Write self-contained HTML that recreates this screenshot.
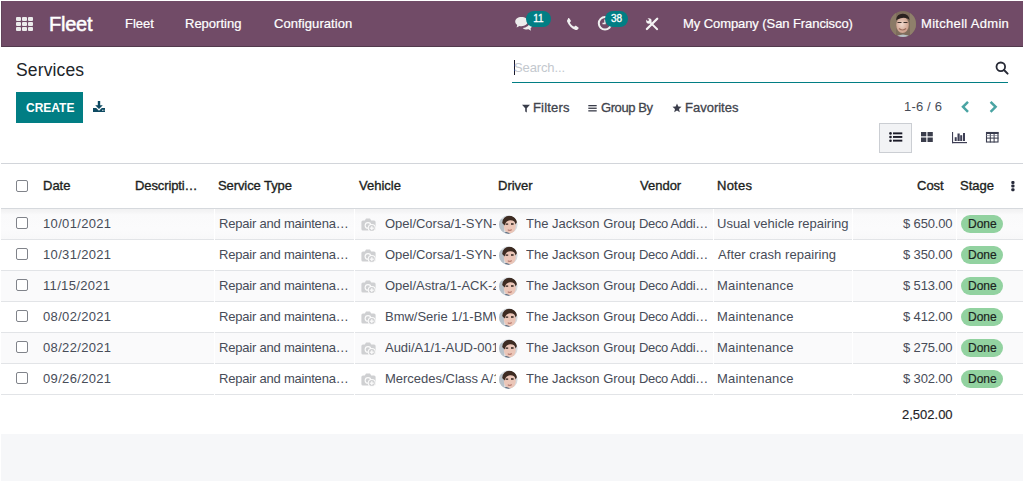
<!DOCTYPE html>
<html><head><meta charset="utf-8">
<title>Services - Fleet</title>
<style>
*{box-sizing:border-box;margin:0;padding:0}
html,body{width:1024px;height:482px;overflow:hidden;background:#fff;font-family:"Liberation Sans",sans-serif;position:relative}
.a{position:absolute;white-space:nowrap;line-height:1}
.b{position:absolute}
.sq{position:absolute;width:5px;height:4px;background:#ebebeb;border-radius:1px}
.badge{position:absolute;height:16px;border-radius:8px;background:#017E84;color:#fff;font-size:10px;-webkit-text-stroke:0.3px #fff;text-align:center;line-height:15.5px;letter-spacing:0px}
.hl{position:absolute;left:1px;width:1022px;height:1px;background:#dee2e6}
.cb{position:absolute;left:16px;width:12px;height:12px;border:1.2px solid #80838a;border-radius:2px;background:#fff}
.done{position:absolute;left:961px;width:42px;height:18px;border-radius:9px;background:#92d2a0}
.stripe{position:absolute;left:1px;width:1022px;height:30px;background:#fafafb}
svg{position:absolute;overflow:visible}
</style></head><body>
<!-- navbar -->
<div class="b" style="left:1px;top:1px;width:1022px;height:46px;background:#714B67;border-bottom:1px solid #523a4d;border-left:1px solid #62445b"></div>
<div class="sq" style="left:16px;top:17px"></div><div class="sq" style="left:22px;top:17px"></div><div class="sq" style="left:28px;top:17px"></div>
<div class="sq" style="left:16px;top:22px"></div><div class="sq" style="left:22px;top:22px"></div><div class="sq" style="left:28px;top:22px"></div>
<div class="sq" style="left:16px;top:27px"></div><div class="sq" style="left:22px;top:27px"></div><div class="sq" style="left:28px;top:27px"></div>

<!-- chat icon -->
<svg style="left:514px;top:16px" width="20" height="16" viewBox="0 0 20 16">
 <path d="M7.5 1C3.9 1 1.2 3 1.2 5.6c0 1.4 .8 2.6 2 3.4L2.6 11.6 5.5 10c.6.1 1.3.2 2 .2 3.6 0 6.3-2 6.3-4.6S11.1 1 7.5 1z" fill="#ececec"/>
 <path d="M15.5 6.5c0 2.9-3 5.2-6.8 5.4 1 1 2.6 1.6 4.3 1.6.5 0 1-.05 1.5-.15l2.5 1.35-.5-2.3c1-.7 1.6-1.7 1.6-2.8 0-1-.6-2-1.6-2.7z" fill="#ececec"/>
</svg>
<div class="badge" style="left:526px;top:11px;width:25px">11</div>
<!-- phone -->
<svg style="left:566px;top:17px" width="14" height="14" viewBox="0 0 14 14">
 <path d="M3.2 1.2 L4.8 3.6 C5 4 4.9 4.4 4.6 4.7 L3.8 5.4 C4.6 7.3 6.2 8.9 8.2 9.8 L8.9 9 C9.2 8.7 9.6 8.6 10 8.8 L12.4 10.4 C12.8 10.7 12.8 11.2 12.5 11.6 L11.4 12.7 C10.9 13.1 10.2 13.2 9.6 13 C5.8 11.6 2.6 8.4 1.1 4.5 C.9 3.9 1 3.2 1.5 2.7 L2.3 1.1 C2.6 .8 3 .8 3.2 1.2z" fill="#f0f0f0"/>
</svg>
<!-- clock -->
<svg style="left:597px;top:15px" width="16" height="16" viewBox="0 0 16 16">
 <circle cx="8" cy="8.3" r="6.2" fill="none" stroke="#f0f0f0" stroke-width="2"/>
 <path d="M8 4.5V8.5H5.5" fill="none" stroke="#f0f0f0" stroke-width="1.4"/>
</svg>
<div class="badge" style="left:605px;top:11px;width:23px">38</div>
<!-- tools -->
<svg style="left:646px;top:18px" width="12" height="12" viewBox="0 0 12 12">
 <path d="M.9 11 L11.2 .7" stroke="#f4f4f4" stroke-width="2.3" stroke-linecap="round"/>
 <path d="M4.2 4.4 L11.2 11.2" stroke="#f4f4f4" stroke-width="1.9" stroke-linecap="round"/>
 <circle cx="2.9" cy="3" r="2.7" fill="#f4f4f4"/>
 <path d="M2.6 2.7 L0 0.1" stroke="#714B67" stroke-width="1.9"/>
</svg>
<!-- user avatar -->
<svg style="left:890px;top:11px" width="26" height="26" viewBox="0 0 26 26">
 <defs><clipPath id="ua"><circle cx="13" cy="13" r="13"/></clipPath>
 <radialGradient id="fg" cx="0.45" cy="0.45" r="0.6"><stop offset="0" stop-color="#f0d8cc"/><stop offset="1" stop-color="#c99a85"/></radialGradient></defs>
 <g clip-path="url(#ua)">
  <rect width="26" height="26" fill="#7e6d5c"/>
  <rect x="0" y="0" width="6" height="26" fill="#8a7a66"/>
  <rect x="20" y="0" width="6" height="26" fill="#8f806b"/>
  <ellipse cx="12.5" cy="14" rx="6.3" ry="8" fill="url(#fg)"/>
  <path d="M6 9 Q7 2.5 13 2.8 Q19 3 19.5 9 L18 7.8 Q13 5.5 7.5 8.5z" fill="#2a2220"/>
  <path d="M7.5 11.5 H11.5 M13.5 11.5 H17.5" stroke="#3a2f2a" stroke-width="1"/>
  <path d="M9 17.5 Q12.5 20.5 16 17.5" stroke="#9c6d5c" stroke-width="1.2" fill="none"/>
  <path d="M3 27 Q13 20 23 27z" fill="#b9c2c8"/>
 </g>
</svg>

<!-- control panel -->
<div class="b" style="left:16px;top:92px;width:67px;height:31px;background:#017E84"></div>
<svg style="left:92px;top:100px" width="14" height="13" viewBox="0 0 14 13">
 <path d="M5.8 1 H8.2 V5.2 H10.8 L7 9 L3.2 5.2 H5.8z" fill="#0e4a62"/>
 <path d="M1 8 H4.2 L7 10.8 L9.8 8 H13 V12 H1z" fill="#0e4a62"/>
 <rect x="10" y="9.8" width=".9" height=".9" fill="#fff"/><rect x="11.5" y="9.8" width=".9" height=".9" fill="#fff"/>
</svg>
<div class="b" style="left:514px;top:60px;width:1px;height:15px;background:#1b1b2a"></div>
<div class="b" style="left:512px;top:82px;width:496px;height:1px;background:#017E84"></div>
<svg style="left:995px;top:61px" width="14" height="14" viewBox="0 0 14 14">
 <circle cx="5.8" cy="5.8" r="4.3" fill="none" stroke="#272a36" stroke-width="1.8"/>
 <path d="M9 9 L12.6 12.6" stroke="#272a36" stroke-width="2" stroke-linecap="round"/>
</svg>
<!-- filter funnel -->
<svg style="left:521px;top:104px" width="10" height="9" viewBox="0 0 10 9">
 <path d="M1 .8 H9 L5.8 4.3 V8.6 L4.2 7.4 V4.3z" fill="#3a3d4a"/>
</svg>
<!-- group by bars -->
<svg style="left:588px;top:104px" width="10" height="9" viewBox="0 0 10 9">
 <rect x=".3" y="1" width="8.4" height="1.3" fill="#3a3d4a"/>
 <rect x=".3" y="3.6" width="8.4" height="1.3" fill="#3a3d4a"/>
 <rect x=".3" y="6.2" width="8.4" height="1.3" fill="#3a3d4a"/>
</svg>
<!-- star -->
<svg style="left:672px;top:103px" width="10" height="10" viewBox="0 0 10 10">
 <path d="M5 .6 L6.3 3.6 L9.5 3.8 L7 5.9 L7.8 9.2 L5 7.4 L2.2 9.2 L3 5.9 L.5 3.8 L3.7 3.6z" fill="#3a3d4a"/>
</svg>
<!-- chevrons -->
<svg style="left:960px;top:100px" width="12" height="14" viewBox="0 0 12 14">
 <path d="M8 1.8 L3 6.8 L8 11.8" fill="none" stroke="#4aa4a3" stroke-width="2.5"/>
</svg>
<svg style="left:988px;top:100px" width="12" height="14" viewBox="0 0 12 14">
 <path d="M2.6 1.8 L7.6 6.8 L2.6 11.8" fill="none" stroke="#4aa4a3" stroke-width="2.5"/>
</svg>
<!-- view switcher -->
<div class="b" style="left:879px;top:123px;width:33px;height:30px;border:1px solid #cbced3;background:#f2f3f5"></div>
<svg style="left:888px;top:131px" width="16" height="12" viewBox="0 0 16 12">
 <circle cx="2.5" cy="2.4" r="1.3" fill="#1b1b28"/><circle cx="2.5" cy="6" r="1.3" fill="#1b1b28"/><circle cx="2.5" cy="9.7" r="1.3" fill="#1b1b28"/>
 <rect x="5" y="1.4" width="9.3" height="1.9" fill="#1b1b28"/><rect x="5" y="5" width="9.3" height="1.9" fill="#1b1b28"/><rect x="5" y="8.7" width="9.3" height="1.9" fill="#1b1b28"/>
</svg>
<svg style="left:920px;top:131px" width="14" height="12" viewBox="0 0 14 12">
 <rect x="1" y="1" width="5.3" height="4.3" fill="#3b3e4c"/><rect x="7.5" y="1" width="5.3" height="4.3" fill="#3b3e4c"/>
 <rect x="1" y="6.5" width="5.3" height="4.5" fill="#3b3e4c"/><rect x="7.5" y="6.5" width="5.3" height="4.5" fill="#3b3e4c"/>
</svg>
<svg style="left:951px;top:131px" width="18" height="13" viewBox="0 0 18 13">
 <rect x="1" y="1" width="1.1" height="11.2" fill="#3e3f55"/><rect x="1" y="11" width="15" height="1.2" fill="#3e3f55"/>
 <rect x="3.7" y="6.2" width="2" height="3.8" fill="#3e3f55"/><rect x="6.5" y="2.5" width="2.2" height="7.5" fill="#3e3f55"/>
 <rect x="9.2" y="4.2" width="2" height="5.8" fill="#3e3f55"/><rect x="12" y="2" width="2" height="8" fill="#3e3f55"/>
</svg>
<svg style="left:985px;top:131px" width="15" height="13" viewBox="0 0 15 13">
 <rect x="1.5" y="1.5" width="11.5" height="9.5" fill="none" stroke="#3a3d4f" stroke-width="1.1"/>
 <rect x="1" y="1" width="12.5" height="2" fill="#3a3d4f"/>
 <rect x="1" y="6.6" width="12.5" height="1" fill="#3a3d4f"/>
 <rect x="4.8" y="1" width="1" height="10.5" fill="#3a3d4f"/><rect x="8.6" y="1" width="1" height="10.5" fill="#3a3d4f"/>
 <rect x="1" y="4.3" width="12.5" height=".6" fill="#6d7080"/>
</svg>

<!-- table -->
<div class="hl" style="top:163px;background:#d2d5da"></div>
<div class="cb" style="top:180px"></div>

<div class="hl" style="top:208px;background:#d6d9dd"></div>
<div class="stripe" style="top:209px;background:linear-gradient(#f1f1f2 0px,#f5f5f6 3px,#fafafb 6px,#fbfbfc 20px,#f8f8f9 30px)"></div>
<div class="cb" style="top:217px"></div>
<svg style="left:360px;top:218px" width="17" height="14" viewBox="0 0 17 14"><path d="M6 .6 H10 L11.2 2.4 H14 Q15.6 2.4 15.6 4 V11 Q15.6 12.6 14 12.6 H3 Q1.4 12.6 1.4 11 V4 Q1.4 2.4 3 2.4 H4.8z" fill="#cfd0d2"/><circle cx="8" cy="7.4" r="3.4" fill="#fbfbfb"/><circle cx="8" cy="7.4" r="2.2" fill="#cfd0d2"/><circle cx="11.8" cy="10" r="4" fill="#fbfbfb"/><circle cx="11.8" cy="10" r="3" fill="#cfd0d2"/><rect x="11.15" y="8.2" width="1.3" height="4" fill="#fbfbfb"/><rect x="9.8" y="9.55" width="4" height="1.3" fill="#fbfbfb"/></svg>
<svg style="left:499px;top:215px" width="19" height="19" viewBox="0 0 19 19"><defs><clipPath id="av0"><circle cx="9.3" cy="9.5" r="9.3"/></clipPath></defs><g clip-path="url(#av0)"><rect width="19" height="19" fill="#d5dbe0"/><rect x="0" y="4" width="5" height="15" fill="#b7c1c9"/><ellipse cx="10.8" cy="11.3" rx="5.9" ry="7.2" fill="#ebc6b8"/><path d="M3.2 8 Q3.8 1 10.5 .8 Q17.5 .8 17.8 7.5 L16.6 9.5 Q16 5 11 5.2 Q6.8 5.4 5.6 10.5z" fill="#3d2b22"/><path d="M6.6 9.2 H9.2 M12 9 H14.6" stroke="#2e221c" stroke-width="1.3"/><path d="M8.8 15 Q10.8 15.8 12.8 14.8" stroke="#a8645a" stroke-width="1" fill="none"/><path d="M4 19.5 Q6 16 9 17.5 Q12 19 14 19.5z" fill="#5a6d80"/></g></svg>
<div class="done" style="top:215px"></div>
<div class="a" style="left:968px;top:218px;font-size:12px;letter-spacing:0.000px;color:#1b2420;-webkit-text-stroke:0.2px #1b2420">Done</div>
<div class="hl" style="top:239px;background:#e2e4e7"></div>
<div class="cb" style="top:248px"></div>
<svg style="left:360px;top:249px" width="17" height="14" viewBox="0 0 17 14"><path d="M6 .6 H10 L11.2 2.4 H14 Q15.6 2.4 15.6 4 V11 Q15.6 12.6 14 12.6 H3 Q1.4 12.6 1.4 11 V4 Q1.4 2.4 3 2.4 H4.8z" fill="#cfd0d2"/><circle cx="8" cy="7.4" r="3.4" fill="#fbfbfb"/><circle cx="8" cy="7.4" r="2.2" fill="#cfd0d2"/><circle cx="11.8" cy="10" r="4" fill="#fbfbfb"/><circle cx="11.8" cy="10" r="3" fill="#cfd0d2"/><rect x="11.15" y="8.2" width="1.3" height="4" fill="#fbfbfb"/><rect x="9.8" y="9.55" width="4" height="1.3" fill="#fbfbfb"/></svg>
<svg style="left:499px;top:246px" width="19" height="19" viewBox="0 0 19 19"><defs><clipPath id="av1"><circle cx="9.3" cy="9.5" r="9.3"/></clipPath></defs><g clip-path="url(#av1)"><rect width="19" height="19" fill="#d5dbe0"/><rect x="0" y="4" width="5" height="15" fill="#b7c1c9"/><ellipse cx="10.8" cy="11.3" rx="5.9" ry="7.2" fill="#ebc6b8"/><path d="M3.2 8 Q3.8 1 10.5 .8 Q17.5 .8 17.8 7.5 L16.6 9.5 Q16 5 11 5.2 Q6.8 5.4 5.6 10.5z" fill="#3d2b22"/><path d="M6.6 9.2 H9.2 M12 9 H14.6" stroke="#2e221c" stroke-width="1.3"/><path d="M8.8 15 Q10.8 15.8 12.8 14.8" stroke="#a8645a" stroke-width="1" fill="none"/><path d="M4 19.5 Q6 16 9 17.5 Q12 19 14 19.5z" fill="#5a6d80"/></g></svg>
<div class="done" style="top:246px"></div>
<div class="a" style="left:968px;top:249px;font-size:12px;letter-spacing:0.000px;color:#1b2420;-webkit-text-stroke:0.2px #1b2420">Done</div>
<div class="hl" style="top:270px;background:#e2e4e7"></div>
<div class="stripe" style="top:271px"></div>
<div class="cb" style="top:279px"></div>
<svg style="left:360px;top:280px" width="17" height="14" viewBox="0 0 17 14"><path d="M6 .6 H10 L11.2 2.4 H14 Q15.6 2.4 15.6 4 V11 Q15.6 12.6 14 12.6 H3 Q1.4 12.6 1.4 11 V4 Q1.4 2.4 3 2.4 H4.8z" fill="#cfd0d2"/><circle cx="8" cy="7.4" r="3.4" fill="#fbfbfb"/><circle cx="8" cy="7.4" r="2.2" fill="#cfd0d2"/><circle cx="11.8" cy="10" r="4" fill="#fbfbfb"/><circle cx="11.8" cy="10" r="3" fill="#cfd0d2"/><rect x="11.15" y="8.2" width="1.3" height="4" fill="#fbfbfb"/><rect x="9.8" y="9.55" width="4" height="1.3" fill="#fbfbfb"/></svg>
<svg style="left:499px;top:277px" width="19" height="19" viewBox="0 0 19 19"><defs><clipPath id="av2"><circle cx="9.3" cy="9.5" r="9.3"/></clipPath></defs><g clip-path="url(#av2)"><rect width="19" height="19" fill="#d5dbe0"/><rect x="0" y="4" width="5" height="15" fill="#b7c1c9"/><ellipse cx="10.8" cy="11.3" rx="5.9" ry="7.2" fill="#ebc6b8"/><path d="M3.2 8 Q3.8 1 10.5 .8 Q17.5 .8 17.8 7.5 L16.6 9.5 Q16 5 11 5.2 Q6.8 5.4 5.6 10.5z" fill="#3d2b22"/><path d="M6.6 9.2 H9.2 M12 9 H14.6" stroke="#2e221c" stroke-width="1.3"/><path d="M8.8 15 Q10.8 15.8 12.8 14.8" stroke="#a8645a" stroke-width="1" fill="none"/><path d="M4 19.5 Q6 16 9 17.5 Q12 19 14 19.5z" fill="#5a6d80"/></g></svg>
<div class="done" style="top:277px"></div>
<div class="a" style="left:968px;top:280px;font-size:12px;letter-spacing:0.000px;color:#1b2420;-webkit-text-stroke:0.2px #1b2420">Done</div>
<div class="hl" style="top:301px;background:#e2e4e7"></div>
<div class="cb" style="top:310px"></div>
<svg style="left:360px;top:311px" width="17" height="14" viewBox="0 0 17 14"><path d="M6 .6 H10 L11.2 2.4 H14 Q15.6 2.4 15.6 4 V11 Q15.6 12.6 14 12.6 H3 Q1.4 12.6 1.4 11 V4 Q1.4 2.4 3 2.4 H4.8z" fill="#cfd0d2"/><circle cx="8" cy="7.4" r="3.4" fill="#fbfbfb"/><circle cx="8" cy="7.4" r="2.2" fill="#cfd0d2"/><circle cx="11.8" cy="10" r="4" fill="#fbfbfb"/><circle cx="11.8" cy="10" r="3" fill="#cfd0d2"/><rect x="11.15" y="8.2" width="1.3" height="4" fill="#fbfbfb"/><rect x="9.8" y="9.55" width="4" height="1.3" fill="#fbfbfb"/></svg>
<svg style="left:499px;top:308px" width="19" height="19" viewBox="0 0 19 19"><defs><clipPath id="av3"><circle cx="9.3" cy="9.5" r="9.3"/></clipPath></defs><g clip-path="url(#av3)"><rect width="19" height="19" fill="#d5dbe0"/><rect x="0" y="4" width="5" height="15" fill="#b7c1c9"/><ellipse cx="10.8" cy="11.3" rx="5.9" ry="7.2" fill="#ebc6b8"/><path d="M3.2 8 Q3.8 1 10.5 .8 Q17.5 .8 17.8 7.5 L16.6 9.5 Q16 5 11 5.2 Q6.8 5.4 5.6 10.5z" fill="#3d2b22"/><path d="M6.6 9.2 H9.2 M12 9 H14.6" stroke="#2e221c" stroke-width="1.3"/><path d="M8.8 15 Q10.8 15.8 12.8 14.8" stroke="#a8645a" stroke-width="1" fill="none"/><path d="M4 19.5 Q6 16 9 17.5 Q12 19 14 19.5z" fill="#5a6d80"/></g></svg>
<div class="done" style="top:308px"></div>
<div class="a" style="left:968px;top:311px;font-size:12px;letter-spacing:0.000px;color:#1b2420;-webkit-text-stroke:0.2px #1b2420">Done</div>
<div class="hl" style="top:332px;background:#e2e4e7"></div>
<div class="stripe" style="top:333px"></div>
<div class="cb" style="top:341px"></div>
<svg style="left:360px;top:342px" width="17" height="14" viewBox="0 0 17 14"><path d="M6 .6 H10 L11.2 2.4 H14 Q15.6 2.4 15.6 4 V11 Q15.6 12.6 14 12.6 H3 Q1.4 12.6 1.4 11 V4 Q1.4 2.4 3 2.4 H4.8z" fill="#cfd0d2"/><circle cx="8" cy="7.4" r="3.4" fill="#fbfbfb"/><circle cx="8" cy="7.4" r="2.2" fill="#cfd0d2"/><circle cx="11.8" cy="10" r="4" fill="#fbfbfb"/><circle cx="11.8" cy="10" r="3" fill="#cfd0d2"/><rect x="11.15" y="8.2" width="1.3" height="4" fill="#fbfbfb"/><rect x="9.8" y="9.55" width="4" height="1.3" fill="#fbfbfb"/></svg>
<svg style="left:499px;top:339px" width="19" height="19" viewBox="0 0 19 19"><defs><clipPath id="av4"><circle cx="9.3" cy="9.5" r="9.3"/></clipPath></defs><g clip-path="url(#av4)"><rect width="19" height="19" fill="#d5dbe0"/><rect x="0" y="4" width="5" height="15" fill="#b7c1c9"/><ellipse cx="10.8" cy="11.3" rx="5.9" ry="7.2" fill="#ebc6b8"/><path d="M3.2 8 Q3.8 1 10.5 .8 Q17.5 .8 17.8 7.5 L16.6 9.5 Q16 5 11 5.2 Q6.8 5.4 5.6 10.5z" fill="#3d2b22"/><path d="M6.6 9.2 H9.2 M12 9 H14.6" stroke="#2e221c" stroke-width="1.3"/><path d="M8.8 15 Q10.8 15.8 12.8 14.8" stroke="#a8645a" stroke-width="1" fill="none"/><path d="M4 19.5 Q6 16 9 17.5 Q12 19 14 19.5z" fill="#5a6d80"/></g></svg>
<div class="done" style="top:339px"></div>
<div class="a" style="left:968px;top:342px;font-size:12px;letter-spacing:0.000px;color:#1b2420;-webkit-text-stroke:0.2px #1b2420">Done</div>
<div class="hl" style="top:363px;background:#e2e4e7"></div>
<div class="cb" style="top:372px"></div>
<svg style="left:360px;top:373px" width="17" height="14" viewBox="0 0 17 14"><path d="M6 .6 H10 L11.2 2.4 H14 Q15.6 2.4 15.6 4 V11 Q15.6 12.6 14 12.6 H3 Q1.4 12.6 1.4 11 V4 Q1.4 2.4 3 2.4 H4.8z" fill="#cfd0d2"/><circle cx="8" cy="7.4" r="3.4" fill="#fbfbfb"/><circle cx="8" cy="7.4" r="2.2" fill="#cfd0d2"/><circle cx="11.8" cy="10" r="4" fill="#fbfbfb"/><circle cx="11.8" cy="10" r="3" fill="#cfd0d2"/><rect x="11.15" y="8.2" width="1.3" height="4" fill="#fbfbfb"/><rect x="9.8" y="9.55" width="4" height="1.3" fill="#fbfbfb"/></svg>
<svg style="left:499px;top:370px" width="19" height="19" viewBox="0 0 19 19"><defs><clipPath id="av5"><circle cx="9.3" cy="9.5" r="9.3"/></clipPath></defs><g clip-path="url(#av5)"><rect width="19" height="19" fill="#d5dbe0"/><rect x="0" y="4" width="5" height="15" fill="#b7c1c9"/><ellipse cx="10.8" cy="11.3" rx="5.9" ry="7.2" fill="#ebc6b8"/><path d="M3.2 8 Q3.8 1 10.5 .8 Q17.5 .8 17.8 7.5 L16.6 9.5 Q16 5 11 5.2 Q6.8 5.4 5.6 10.5z" fill="#3d2b22"/><path d="M6.6 9.2 H9.2 M12 9 H14.6" stroke="#2e221c" stroke-width="1.3"/><path d="M8.8 15 Q10.8 15.8 12.8 14.8" stroke="#a8645a" stroke-width="1" fill="none"/><path d="M4 19.5 Q6 16 9 17.5 Q12 19 14 19.5z" fill="#5a6d80"/></g></svg>
<div class="done" style="top:370px"></div>
<div class="a" style="left:968px;top:373px;font-size:12px;letter-spacing:0.000px;color:#1b2420;-webkit-text-stroke:0.2px #1b2420">Done</div>
<div class="hl" style="top:394px;background:#e2e4e7"></div>
<div class="a" style="left:49px;top:14px;font-size:20px;letter-spacing:-0.250px;color:#fff;-webkit-text-stroke:0.5px #fff;">Fleet</div>
<div class="a" style="left:125px;top:17px;font-size:13px;letter-spacing:0.000px;color:#fff;-webkit-text-stroke:0.2px #fff;">Fleet</div>
<div class="a" style="left:185px;top:17px;font-size:13px;letter-spacing:0.000px;color:#fff;-webkit-text-stroke:0.2px #fff;">Reporting</div>
<div class="a" style="left:274px;top:17px;font-size:13px;letter-spacing:0.083px;color:#fff;-webkit-text-stroke:0.2px #fff;">Configuration</div>
<div class="a" style="left:683px;top:17px;font-size:13px;letter-spacing:-0.080px;color:#fff;-webkit-text-stroke:0.2px #fff;">My Company (San Francisco)</div>
<div class="a" style="left:921px;top:17px;font-size:13px;letter-spacing:0.308px;color:#fff;-webkit-text-stroke:0.2px #fff;">Mitchell Admin</div>
<div class="a" style="left:16px;top:62px;font-size:17.5px;letter-spacing:0.143px;color:#212529;">Services</div>
<div class="a" style="left:26px;top:102px;font-size:12px;letter-spacing:0.000px;color:#fff;font-weight:bold;">CREATE</div>
<div class="a" style="left:514px;top:61px;font-size:13px;letter-spacing:-0.125px;color:#c3c8ce;">Search...</div>
<div class="a" style="left:533px;top:101px;font-size:13px;letter-spacing:0.167px;color:#41444d;-webkit-text-stroke:0.3px #41444d;">Filters</div>
<div class="a" style="left:601px;top:101px;font-size:13px;letter-spacing:-0.429px;color:#41444d;-webkit-text-stroke:0.3px #41444d;">Group By</div>
<div class="a" style="left:685px;top:101px;font-size:13px;letter-spacing:0.000px;color:#41444d;-webkit-text-stroke:0.3px #41444d;">Favorites</div>
<div class="a" style="left:904px;top:100px;font-size:13px;letter-spacing:0.167px;color:#474c58;">1-6 / 6</div>
<div class="a" style="left:43px;top:179px;font-size:13px;letter-spacing:0.000px;color:#1d1f22;-webkit-text-stroke:0.35px #1d1f22;">Date</div>
<div class="a" style="left:135px;top:179px;font-size:13px;letter-spacing:-0.111px;color:#1d1f22;-webkit-text-stroke:0.35px #1d1f22;">Descripti…</div>
<div class="a" style="left:218px;top:179px;font-size:13px;letter-spacing:-0.091px;color:#1d1f22;-webkit-text-stroke:0.35px #1d1f22;">Service Type</div>
<div class="a" style="left:359px;top:179px;font-size:13px;letter-spacing:0.000px;color:#1d1f22;-webkit-text-stroke:0.35px #1d1f22;">Vehicle</div>
<div class="a" style="left:498px;top:179px;font-size:13px;letter-spacing:0.000px;color:#1d1f22;-webkit-text-stroke:0.35px #1d1f22;">Driver</div>
<div class="a" style="left:640px;top:179px;font-size:13px;letter-spacing:0.000px;color:#1d1f22;-webkit-text-stroke:0.35px #1d1f22;">Vendor</div>
<div class="a" style="left:717px;top:179px;font-size:13px;letter-spacing:0.250px;color:#1d1f22;-webkit-text-stroke:0.35px #1d1f22;">Notes</div>
<div class="a" style="left:917px;top:179px;font-size:13px;letter-spacing:0.000px;color:#1d1f22;-webkit-text-stroke:0.35px #1d1f22;">Cost</div>
<div class="a" style="left:960px;top:179px;font-size:13px;letter-spacing:0.000px;color:#1d1f22;-webkit-text-stroke:0.35px #1d1f22;">Stage</div>
<div class="a" style="left:902px;top:408px;font-size:13px;letter-spacing:0.000px;color:#1f2226;-webkit-text-stroke:0.15px #1f2226;">2,502.00</div>
<div class="a" style="left:43px;top:217px;font-size:13px;letter-spacing:0.333px;color:#474c58;">10/01/2021</div>
<div class="a" style="left:219px;top:217px;font-size:13px;letter-spacing:-0.211px;color:#474c58;">Repair and maintena…</div>
<div class="a" style="left:385px;top:217px;font-size:13px;letter-spacing:-0.015px;color:#474c58;width:111px;overflow:hidden;">Opel/Corsa/1-SYN-</div>
<div class="a" style="left:526px;top:217px;font-size:13px;letter-spacing:-0.015px;color:#474c58;width:109px;overflow:hidden;">The Jackson Group</div>
<div class="a" style="left:639px;top:217px;font-size:13px;letter-spacing:-0.333px;color:#474c58;">Deco Addi…</div>
<div class="a" style="left:717px;top:217px;font-size:13px;letter-spacing:0.000px;color:#474c58;">Usual vehicle repairing</div>
<div class="a" style="left:903px;top:217px;font-size:13px;letter-spacing:-0.143px;color:#474c58;">$ 650.00</div>
<div class="a" style="left:43px;top:248px;font-size:13px;letter-spacing:0.333px;color:#474c58;">10/31/2021</div>
<div class="a" style="left:219px;top:248px;font-size:13px;letter-spacing:-0.211px;color:#474c58;">Repair and maintena…</div>
<div class="a" style="left:385px;top:248px;font-size:13px;letter-spacing:-0.015px;color:#474c58;width:111px;overflow:hidden;">Opel/Corsa/1-SYN-</div>
<div class="a" style="left:526px;top:248px;font-size:13px;letter-spacing:-0.015px;color:#474c58;width:109px;overflow:hidden;">The Jackson Group</div>
<div class="a" style="left:639px;top:248px;font-size:13px;letter-spacing:-0.333px;color:#474c58;">Deco Addi…</div>
<div class="a" style="left:718px;top:248px;font-size:13px;letter-spacing:0.050px;color:#474c58;">After crash repairing</div>
<div class="a" style="left:903px;top:248px;font-size:13px;letter-spacing:-0.143px;color:#474c58;">$ 350.00</div>
<div class="a" style="left:43px;top:279px;font-size:13px;letter-spacing:0.333px;color:#474c58;">11/15/2021</div>
<div class="a" style="left:219px;top:279px;font-size:13px;letter-spacing:-0.211px;color:#474c58;">Repair and maintena…</div>
<div class="a" style="left:385px;top:279px;font-size:13px;letter-spacing:-0.015px;color:#474c58;width:111px;overflow:hidden;">Opel/Astra/1-ACK-205</div>
<div class="a" style="left:526px;top:279px;font-size:13px;letter-spacing:-0.015px;color:#474c58;width:109px;overflow:hidden;">The Jackson Group</div>
<div class="a" style="left:639px;top:279px;font-size:13px;letter-spacing:-0.333px;color:#474c58;">Deco Addi…</div>
<div class="a" style="left:717px;top:279px;font-size:13px;letter-spacing:0.200px;color:#474c58;">Maintenance</div>
<div class="a" style="left:903px;top:279px;font-size:13px;letter-spacing:-0.143px;color:#474c58;">$ 513.00</div>
<div class="a" style="left:43px;top:310px;font-size:13px;letter-spacing:0.333px;color:#474c58;">08/02/2021</div>
<div class="a" style="left:219px;top:310px;font-size:13px;letter-spacing:-0.211px;color:#474c58;">Repair and maintena…</div>
<div class="a" style="left:385px;top:310px;font-size:13px;letter-spacing:-0.015px;color:#474c58;width:111px;overflow:hidden;">Bmw/Serie 1/1-BMW-001</div>
<div class="a" style="left:526px;top:310px;font-size:13px;letter-spacing:-0.015px;color:#474c58;width:109px;overflow:hidden;">The Jackson Group</div>
<div class="a" style="left:639px;top:310px;font-size:13px;letter-spacing:-0.333px;color:#474c58;">Deco Addi…</div>
<div class="a" style="left:717px;top:310px;font-size:13px;letter-spacing:0.200px;color:#474c58;">Maintenance</div>
<div class="a" style="left:903px;top:310px;font-size:13px;letter-spacing:-0.143px;color:#474c58;">$ 412.00</div>
<div class="a" style="left:43px;top:341px;font-size:13px;letter-spacing:0.333px;color:#474c58;">08/22/2021</div>
<div class="a" style="left:219px;top:341px;font-size:13px;letter-spacing:-0.211px;color:#474c58;">Repair and maintena…</div>
<div class="a" style="left:385px;top:341px;font-size:13px;letter-spacing:-0.015px;color:#474c58;width:111px;overflow:hidden;">Audi/A1/1-AUD-001</div>
<div class="a" style="left:526px;top:341px;font-size:13px;letter-spacing:-0.015px;color:#474c58;width:109px;overflow:hidden;">The Jackson Group</div>
<div class="a" style="left:639px;top:341px;font-size:13px;letter-spacing:-0.333px;color:#474c58;">Deco Addi…</div>
<div class="a" style="left:717px;top:341px;font-size:13px;letter-spacing:0.200px;color:#474c58;">Maintenance</div>
<div class="a" style="left:903px;top:341px;font-size:13px;letter-spacing:-0.143px;color:#474c58;">$ 275.00</div>
<div class="a" style="left:43px;top:372px;font-size:13px;letter-spacing:0.333px;color:#474c58;">09/26/2021</div>
<div class="a" style="left:219px;top:372px;font-size:13px;letter-spacing:-0.211px;color:#474c58;">Repair and maintena…</div>
<div class="a" style="left:385px;top:372px;font-size:13px;letter-spacing:-0.015px;color:#474c58;width:111px;overflow:hidden;">Mercedes/Class A/1-MER-001</div>
<div class="a" style="left:526px;top:372px;font-size:13px;letter-spacing:-0.015px;color:#474c58;width:109px;overflow:hidden;">The Jackson Group</div>
<div class="a" style="left:639px;top:372px;font-size:13px;letter-spacing:-0.333px;color:#474c58;">Deco Addi…</div>
<div class="a" style="left:717px;top:372px;font-size:13px;letter-spacing:0.200px;color:#474c58;">Maintenance</div>
<div class="a" style="left:903px;top:372px;font-size:13px;letter-spacing:-0.143px;color:#474c58;">$ 302.00</div>
<svg style="left:1010px;top:180px" width="6" height="12" viewBox="0 0 6 12">
 <rect x="1.3" y="1" width="3.2" height="3" rx="1" fill="#272a3a"/><rect x="1.3" y="4.6" width="3.2" height="3" rx="1" fill="#272a3a"/><rect x="1.3" y="8.2" width="3.2" height="3" rx="1" fill="#272a3a"/>
</svg>
<div class="b" style="left:214px;top:209px;width:1px;height:186px;background:#fff"></div>
<div class="b" style="left:354px;top:209px;width:1px;height:186px;background:#fff"></div>
<div class="b" style="left:713px;top:209px;width:1px;height:186px;background:#fff"></div>
<div class="b" style="left:852px;top:209px;width:1px;height:186px;background:#fff"></div>
<div class="b" style="left:956px;top:209px;width:1px;height:186px;background:#fff"></div>
<div class="b" style="left:1px;top:434px;width:1022px;height:47px;background:#f6f7f9"></div>
</body></html>
